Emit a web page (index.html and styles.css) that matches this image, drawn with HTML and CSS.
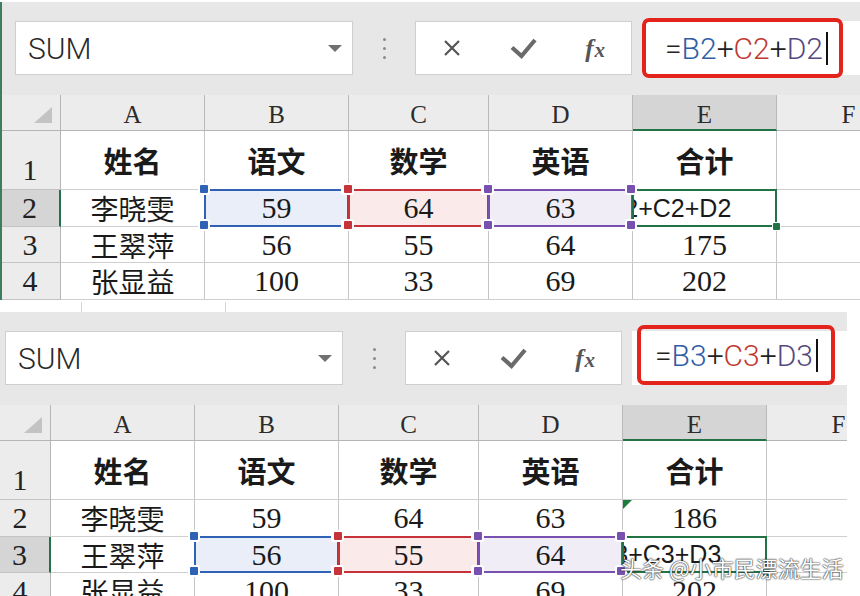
FILE: index.html
```html
<!DOCTYPE html>
<html lang="zh-CN">
<head>
  <meta charset="UTF-8">
  <title>SUM 公式示例</title>
  <link rel="stylesheet" href="styles.css">
</head>
<body>
  <!-- first shot: editing E2 -->
  <div class="panel panel-top">
    <div class="formula-bar">
      <div class="name-box"><span class="name-text">SUM</span><span class="caret"></span></div>
      <div class="dots"><i></i><i></i><i></i></div>
      <div class="fx-buttons">
        <span class="fx-btn">
          <svg width="18" height="18" viewBox="0 0 18 18"><path d="M2 2L16 16M16 2L2 16" stroke="#555" stroke-width="2.2" fill="none"/></svg>
        </span>
        <span class="fx-btn">
          <svg width="27" height="21" viewBox="0 0 27 21"><path d="M2 9.5L11.5 18L25 2" stroke="#6a6a6a" stroke-width="4.2" fill="none"/></svg>
        </span>
        <span class="fx-btn"><span class="fx-label">f<span class="x">x</span></span></span>
      </div>
      <div class="formula-input">
        <div class="formula-box">
          <span>=</span><span class="c-blue">B2</span><span class="op">+</span><span class="c-red">C2</span><span class="op">+</span><span class="c-purple">D2</span><span class="cursor"></span>
        </div>
      </div>
    </div>

    <div class="sheet">
      <div class="cell corner"><span class="select-all"></span></div>
      <div class="cell col-head">A</div>
      <div class="cell col-head">B</div>
      <div class="cell col-head">C</div>
      <div class="cell col-head">D</div>
      <div class="cell col-head is-active">E</div>
      <div class="cell col-head">F</div>

      <div class="cell row-head row-first">1</div>
      <div class="cell title">姓名</div>
      <div class="cell title">语文</div>
      <div class="cell title">数学</div>
      <div class="cell title">英语</div>
      <div class="cell title">合计</div>
      <div class="cell"></div>

      <div class="cell row-head is-active">2</div>
      <div class="cell name">李晓雯</div>
      <div class="cell ref ref-blue">59<i class="h tl"></i><i class="h tr"></i><i class="h bl"></i><i class="h br"></i></div>
      <div class="cell ref ref-red">64<i class="h tl"></i><i class="h tr"></i><i class="h bl"></i><i class="h br"></i></div>
      <div class="cell ref ref-purple">63<i class="h tl"></i><i class="h tr"></i><i class="h bl"></i><i class="h br"></i></div>
      <div class="cell active"><span class="edit"><span>=B2+C2+D2</span></span><i class="fill-handle"></i></div>
      <div class="cell"></div>

      <div class="cell row-head">3</div>
      <div class="cell name">王翠萍</div>
      <div class="cell">56</div>
      <div class="cell">55</div>
      <div class="cell">64</div>
      <div class="cell">175</div>
      <div class="cell"></div>

      <div class="cell row-head">4</div>
      <div class="cell name">张显益</div>
      <div class="cell">100</div>
      <div class="cell">33</div>
      <div class="cell">69</div>
      <div class="cell">202</div>
      <div class="cell"></div>
    </div>
  </div>

  <div class="strip"><span></span><span></span></div>

  <!-- second shot: editing E3 -->
  <div class="panel panel-bottom">
    <div class="formula-bar">
      <div class="name-box"><span class="name-text">SUM</span><span class="caret"></span></div>
      <div class="dots"><i></i><i></i><i></i></div>
      <div class="fx-buttons">
        <span class="fx-btn">
          <svg width="18" height="18" viewBox="0 0 18 18"><path d="M2 2L16 16M16 2L2 16" stroke="#555" stroke-width="2.2" fill="none"/></svg>
        </span>
        <span class="fx-btn">
          <svg width="27" height="21" viewBox="0 0 27 21"><path d="M2 9.5L11.5 18L25 2" stroke="#6a6a6a" stroke-width="4.2" fill="none"/></svg>
        </span>
        <span class="fx-btn"><span class="fx-label">f<span class="x">x</span></span></span>
      </div>
      <div class="formula-input">
        <div class="formula-box">
          <span>=</span><span class="c-blue">B3</span><span class="op">+</span><span class="c-red">C3</span><span class="op">+</span><span class="c-purple">D3</span><span class="cursor"></span>
        </div>
      </div>
    </div>

    <div class="sheet">
      <div class="cell corner"><span class="select-all"></span></div>
      <div class="cell col-head">A</div>
      <div class="cell col-head">B</div>
      <div class="cell col-head">C</div>
      <div class="cell col-head">D</div>
      <div class="cell col-head is-active">E</div>
      <div class="cell col-head">F</div>

      <div class="cell row-head row-first">1</div>
      <div class="cell title">姓名</div>
      <div class="cell title">语文</div>
      <div class="cell title">数学</div>
      <div class="cell title">英语</div>
      <div class="cell title">合计</div>
      <div class="cell"></div>

      <div class="cell row-head">2</div>
      <div class="cell name">李晓雯</div>
      <div class="cell">59</div>
      <div class="cell">64</div>
      <div class="cell">63</div>
      <div class="cell">186<i class="err"></i></div>
      <div class="cell"></div>

      <div class="cell row-head is-active">3</div>
      <div class="cell name">王翠萍</div>
      <div class="cell ref ref-blue">56<i class="h tl"></i><i class="h tr"></i><i class="h bl"></i><i class="h br"></i></div>
      <div class="cell ref ref-red">55<i class="h tl"></i><i class="h tr"></i><i class="h bl"></i><i class="h br"></i></div>
      <div class="cell ref ref-purple">64<i class="h tl"></i><i class="h tr"></i><i class="h bl"></i><i class="h br"></i></div>
      <div class="cell active"><span class="edit"><span>=B3+C3+D3</span></span><i class="fill-handle"></i></div>
      <div class="cell"></div>

      <div class="cell row-head">4</div>
      <div class="cell name">张显益</div>
      <div class="cell">100</div>
      <div class="cell">33</div>
      <div class="cell">69</div>
      <div class="cell">202</div>
      <div class="cell"></div>
    </div>

    <div class="watermark">头条 @小市民漂流生活</div>
  </div>
</body>
</html>
```

FILE: styles.css
```css
/* General */
* {
  box-sizing: border-box;
}

body {
  margin: 0;
  padding-top: 2px;
  width: 860px;
  height: 596px;
  overflow: hidden;
  background-color: #fff;
  font-family: Roboto, "Noto Sans CJK SC", sans-serif;
}

/* One excel screenshot */
.panel {
  position: relative;
  width: 860px;
  height: 298px;
  background-color: #e7e7e7;
  overflow: hidden;
}

.panel-bottom {
  margin-left: -10px;
  width: 857px;
}

/* green window edge on the left of the first shot */
.panel-top::after {
  content: '';
  position: absolute;
  left: 0;
  top: 0;
  bottom: 0;
  width: 2px;
  background-color: #3f7d61;
  z-index: 5;
}

/* Formula bar */
.formula-bar {
  display: flex;
  align-items: flex-start;
  height: 93px;
  padding: 19px 0 0 15px;
}

.name-box {
  width: 338px;
  height: 54px;
  background-color: #fff;
  border: 1px solid #cfcfcf;
  display: flex;
  align-items: center;
  padding-left: 12px;
}

.name-text {
  font-size: 30px;
  font-weight: 300;
  color: #2a2a2a;
}

.caret {
  margin-left: auto;
  margin-right: 10px;
  border-left: 7px solid transparent;
  border-right: 7px solid transparent;
  border-top: 7px solid #707070;
}

.dots {
  width: 62px;
  height: 54px;
  display: flex;
  flex-direction: column;
  align-items: center;
  justify-content: center;
  gap: 6px;
}

.dots i {
  width: 3px;
  height: 3px;
  border-radius: 50%;
  background-color: #8a8a8a;
}

.fx-buttons {
  width: 217px;
  height: 54px;
  background-color: #fff;
  border: 1px solid #cfcfcf;
  display: flex;
}

.fx-btn {
  flex: 1;
  display: flex;
  align-items: center;
  justify-content: center;
}

.fx-label {
  font-family: "Liberation Serif", serif;
  font-style: italic;
  font-weight: bold;
  color: #555;
  font-size: 25px;
  line-height: 1;
}

.fx-label .x {
  font-size: 21px;
  margin-left: 1px;
}

.formula-input {
  flex: 1;
  margin-left: 10px;
  height: 54px;
  background-color: #fff;
  display: flex;
  align-items: center;
}

/* red highlight drawn round the formula */
.formula-box {
  flex-shrink: 0;
  width: 201px;
  height: 60px;
  margin: -3px 0;
  border: 4px solid #e3241c;
  border-radius: 7px;
  display: flex;
  align-items: center;
  padding-left: 19px;
  font-size: 30px;
  font-weight: 300;
  color: #222;
}

.panel-bottom .formula-box {
  width: 198px;
  margin: -8px 0 -2px 5px;
  padding-left: 14px;
}

.c-blue {
  color: #2f5da6;
}

.c-red {
  color: #c0392f;
}

.c-purple {
  color: #56497e;
}

.cursor {
  width: 2px;
  height: 33px;
  background-color: #111;
  margin-left: 3px;
}

/* Sheet grid */
.sheet {
  display: grid;
  grid-template-columns: 61px 144px 144px 140px 144px 144px 144px;
  grid-template-rows: 36px 59px 37px 36px 37px;
  position: relative;
  z-index: 0;
  background-color: #fff;
  font-family: "Liberation Serif", "Noto Sans CJK SC", serif;
  color: #1a1a1a;
}

.cell {
  position: relative;
  display: flex;
  align-items: center;
  justify-content: center;
  border-right: 1px solid #c6c6c6;
  border-bottom: 1px solid #cfcfcf;
  font-size: 30px;
  line-height: 1;
  white-space: nowrap;
}

.corner {
  background-color: #ececec;
  justify-content: flex-end;
  align-items: flex-end;
  padding: 0 8px 7px 0;
  border-right-color: #b5b5b5;
  border-bottom-color: #b5b5b5;
}

.select-all {
  width: 0;
  height: 0;
  border-left: 18px solid transparent;
  border-bottom: 16px solid #c3c3c3;
}

.col-head {
  background-color: #ececec;
  border-right-color: #b9b9b9;
  border-bottom-color: #b5b5b5;
  font-family: "Liberation Serif", serif;
  font-size: 25px;
  color: #2b2b2b;
  padding-top: 4px;
}

.col-head.is-active {
  background-color: #d5d5d5;
  border-bottom: 2px solid #217346;
}

.row-head {
  background-color: #ececec;
  border-right-color: #b5b5b5;
  border-bottom-color: #c4c4c4;
  color: #222;
}

.row-head.is-active {
  background-color: #d5d5d5;
  border-right: 2px solid #217346;
}

.row-first {
  align-items: flex-end;
  padding-bottom: 4px;
}

.title {
  font-family: "Noto Sans CJK SC", sans-serif;
  font-weight: 700;
  font-size: 29px;
}

.name {
  font-family: "Noto Sans CJK SC", sans-serif;
  font-size: 28px;
}

/* Range references while editing */
.ref-blue {
  --ref: #2f62b4;
  background-color: #e9eef8;
}

.ref-red {
  --ref: #c7333b;
  background-color: #fbeaea;
}

.ref-purple {
  --ref: #7851b0;
  background-color: #f1edf7;
}

.ref::before {
  content: '';
  position: absolute;
  inset: -1px;
  border: 2px solid var(--ref);
  z-index: 1;
}

.h {
  position: absolute;
  width: 8px;
  height: 8px;
  background-color: var(--ref);
  box-shadow: 0 0 0 2px #fff;
  border-radius: 1px;
  z-index: 3;
}

.h.tl { left: -5px; top: -5px; }
.h.tr { right: -3px; top: -5px; }
.h.bl { left: -5px; bottom: -3px; }
.h.br { right: -3px; bottom: -3px; }

/* Active (edited) cell */
.active {
  justify-content: flex-start;
}

.active::before {
  content: '';
  position: absolute;
  inset: -1px;
  border: 2px solid #217346;
  z-index: 1;
}

.edit {
  display: block;
  width: 100%;
  overflow: hidden;
  font-family: "Liberation Sans", sans-serif;
  font-size: 25px;
}

.edit span {
  display: block;
  margin-left: -40px;
}

.fill-handle {
  position: absolute;
  right: -4px;
  bottom: -4px;
  width: 7px;
  height: 7px;
  background-color: #217346;
  box-shadow: 0 0 0 1px #fff;
  border-radius: 1px;
  z-index: 3;
}

/* green error marker */
.err {
  position: absolute;
  left: 0;
  top: 0;
  width: 0;
  height: 0;
  border-top: 9px solid #1f7a3d;
  border-right: 9px solid transparent;
}

/* white gap between the two shots */
.strip {
  display: flex;
  height: 12px;
  padding: 2px 0 0 81px;
  background-color: #fff;
}

.strip span {
  width: 144px;
  border-left: 1px solid #d4d4d4;
}

.watermark {
  position: absolute;
  left: 630px;
  top: 244px;
  font-family: "Noto Sans CJK SC", sans-serif;
  font-size: 22px;
  line-height: 1;
  color: #fff;
  white-space: nowrap;
  text-shadow: 0 0 2px #222, 0 0 1px #000;
  z-index: 10;
}
```
